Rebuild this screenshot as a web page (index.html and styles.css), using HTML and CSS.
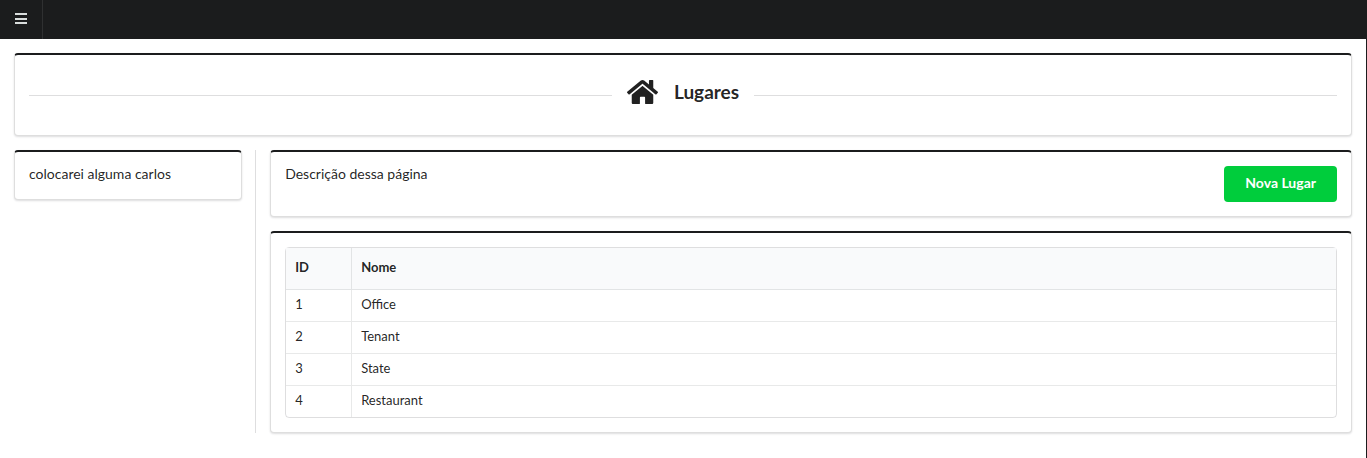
FILE: index.html
```html
<!DOCTYPE html>
<html lang="pt-BR">
<head>
<meta charset="utf-8">
<meta name="viewport" content="width=device-width, initial-scale=1">
<title>Lugares</title>
<link rel="stylesheet" href="styles.css">
</head>
<body>
<nav class="topbar">
  <button class="menu-button" type="button" aria-label="Menu">
    <svg class="menu-icon" viewBox="0 0 12 12" aria-hidden="true"><path d="M0 1h12v2H0zM0 6h12v2H0zM0 10h12v2H0z"/></svg>
  </button>
</nav>
<header class="page-head">
  <div class="segment">
    <div class="title-divider">
      <h1 class="title">
        <svg class="home-icon" viewBox="0 0 576 512" aria-hidden="true"><path d="M488 312.700V456c0 13.300-10.700 24-24 24H348c-6.600 0-12-5.400-12-12V356c0-6.600-5.400-12-12-12h-72c-6.600 0-12 5.400-12 12v112c0 6.600-5.400 12-12 12H112c-13.300 0-24-10.700-24-24V312.700c0-3.600 1.600-7 4.400-9.300l188-154.800c4.400-3.600 10.800-3.600 15.300 0l188 154.800c2.700 2.300 4.300 5.700 4.300 9.300zm83.600-60.900L488 182.900V44.400c0-6.600-5.400-12-12-12h-56c-6.600 0-12 5.400-12 12V117l-89.500-73.700c-17.700-14.600-43.300-14.600-61 0L4.400 251.800c-5.100 4.200-5.800 11.800-1.600 16.900l25.500 31c4.200 5.100 11.800 5.800 16.900 1.600l235.200-193.700c4.400-3.600 10.800-3.600 15.300 0l235.200 193.700c5.100 4.200 12.700 3.500 16.900-1.600l25.500-31c4.200-5.200 3.400-12.700-1.700-16.900z"/></svg>
        <span>Lugares</span>
      </h1>
    </div>
  </div>
</header>
<div class="layout">
  <aside class="side">
    <div class="segment note">colocarei alguma carlos</div>
  </aside>
  <main class="main">
    <section class="segment intro">
      <p class="description">Descrição dessa página</p>
      <button class="new-button" type="button">Nova Lugar</button>
    </section>
    <section class="segment">
      <table class="places">
        <thead><tr><th class="id" scope="col">ID</th><th scope="col">Nome</th></tr></thead>
        <tbody>
          <tr><td>1</td><td>Office</td></tr>
          <tr><td>2</td><td>Tenant</td></tr>
          <tr><td>3</td><td>State</td></tr>
          <tr><td>4</td><td>Restaurant</td></tr>
        </tbody>
      </table>
    </section>
  </main>
</div>
</body>
</html>
```
FILE: styles.css
```css
* { box-sizing: border-box; }
html { border-right: 1px solid #1b1c1d; min-height: 100%; }
body {
  margin: 0;
  background: #fff;
  color: rgba(0, 0, 0, .87);
  font: 14px/16px Lato, sans-serif;
}
.topbar {
  display: flex;
  height: 39px;
  background: #1b1c1d;
}
.menu-button {
  display: flex;
  align-items: center;
  padding: 0 15px 4px;
  border: 0;
  border-right: 1px solid #2f3031;
  background: none;
}
.menu-icon { width: 12px; height: 12px; fill: #d9dddc; }
.page-head { padding: 14px; }
.segment {
  padding: 14px;
  border: 1px solid rgba(34, 36, 38, .15);
  border-top: 2px solid #1b1c1d;
  border-radius: 4px;
  box-shadow: 0 1px 2px rgba(34, 36, 38, .15);
}
.note { padding-bottom: 17px; }
.title-divider {
  display: flex;
  align-items: center;
  gap: 15px;
  height: 52px;
}
.title-divider::before,
.title-divider::after {
  content: "";
  flex: 1;
  height: 1px;
  background: rgba(34, 36, 38, .15);
}
.title {
  display: flex;
  align-items: center;
  gap: 16px;
  margin: 0;
  padding-bottom: 7px;
  font-size: 19px;
  line-height: 24px;
}
.home-icon { width: 31px; height: 28px; fill: currentColor; }
.layout {
  display: grid;
  grid-template-columns: 3fr 13fr;
  padding-bottom: 14px;
}
.side {
  padding: 0 13px 0 14px;
  border-right: 1px solid rgba(34, 36, 38, .15);
}
.main {
  display: flex;
  flex-direction: column;
  gap: 14px;
  padding: 0 14px;
}
.intro {
  display: flex;
  justify-content: space-between;
  align-items: flex-start;
}
.description { margin: 0; }
.new-button {
  height: 36px;
  padding: 0 21px 2px;
  border: 0;
  border-radius: 4px;
  background: #00cd3c;
  color: #fff;
  font: bold 14px/14px Lato, sans-serif;
}
.places {
  width: 100%;
  border: 1px solid rgba(34, 36, 38, .15);
  border-radius: 4px;
  border-collapse: separate;
  border-spacing: 0;
  font-size: 13px;
  line-height: 15px;
  text-align: left;
}
.places th {
  padding: 12px 9px 14px;
  background: #f9fafb;
  border-bottom: 1px solid rgba(34, 36, 38, .1);
}
.places td {
  padding: 7px 9px 9px;
  border-bottom: 1px solid rgba(34, 36, 38, .1);
}
.places tr:last-child td { border-bottom: 0; }
.places th + th,
.places td + td { border-left: 1px solid rgba(34, 36, 38, .1); }
.places .id { width: 65px; }
```
